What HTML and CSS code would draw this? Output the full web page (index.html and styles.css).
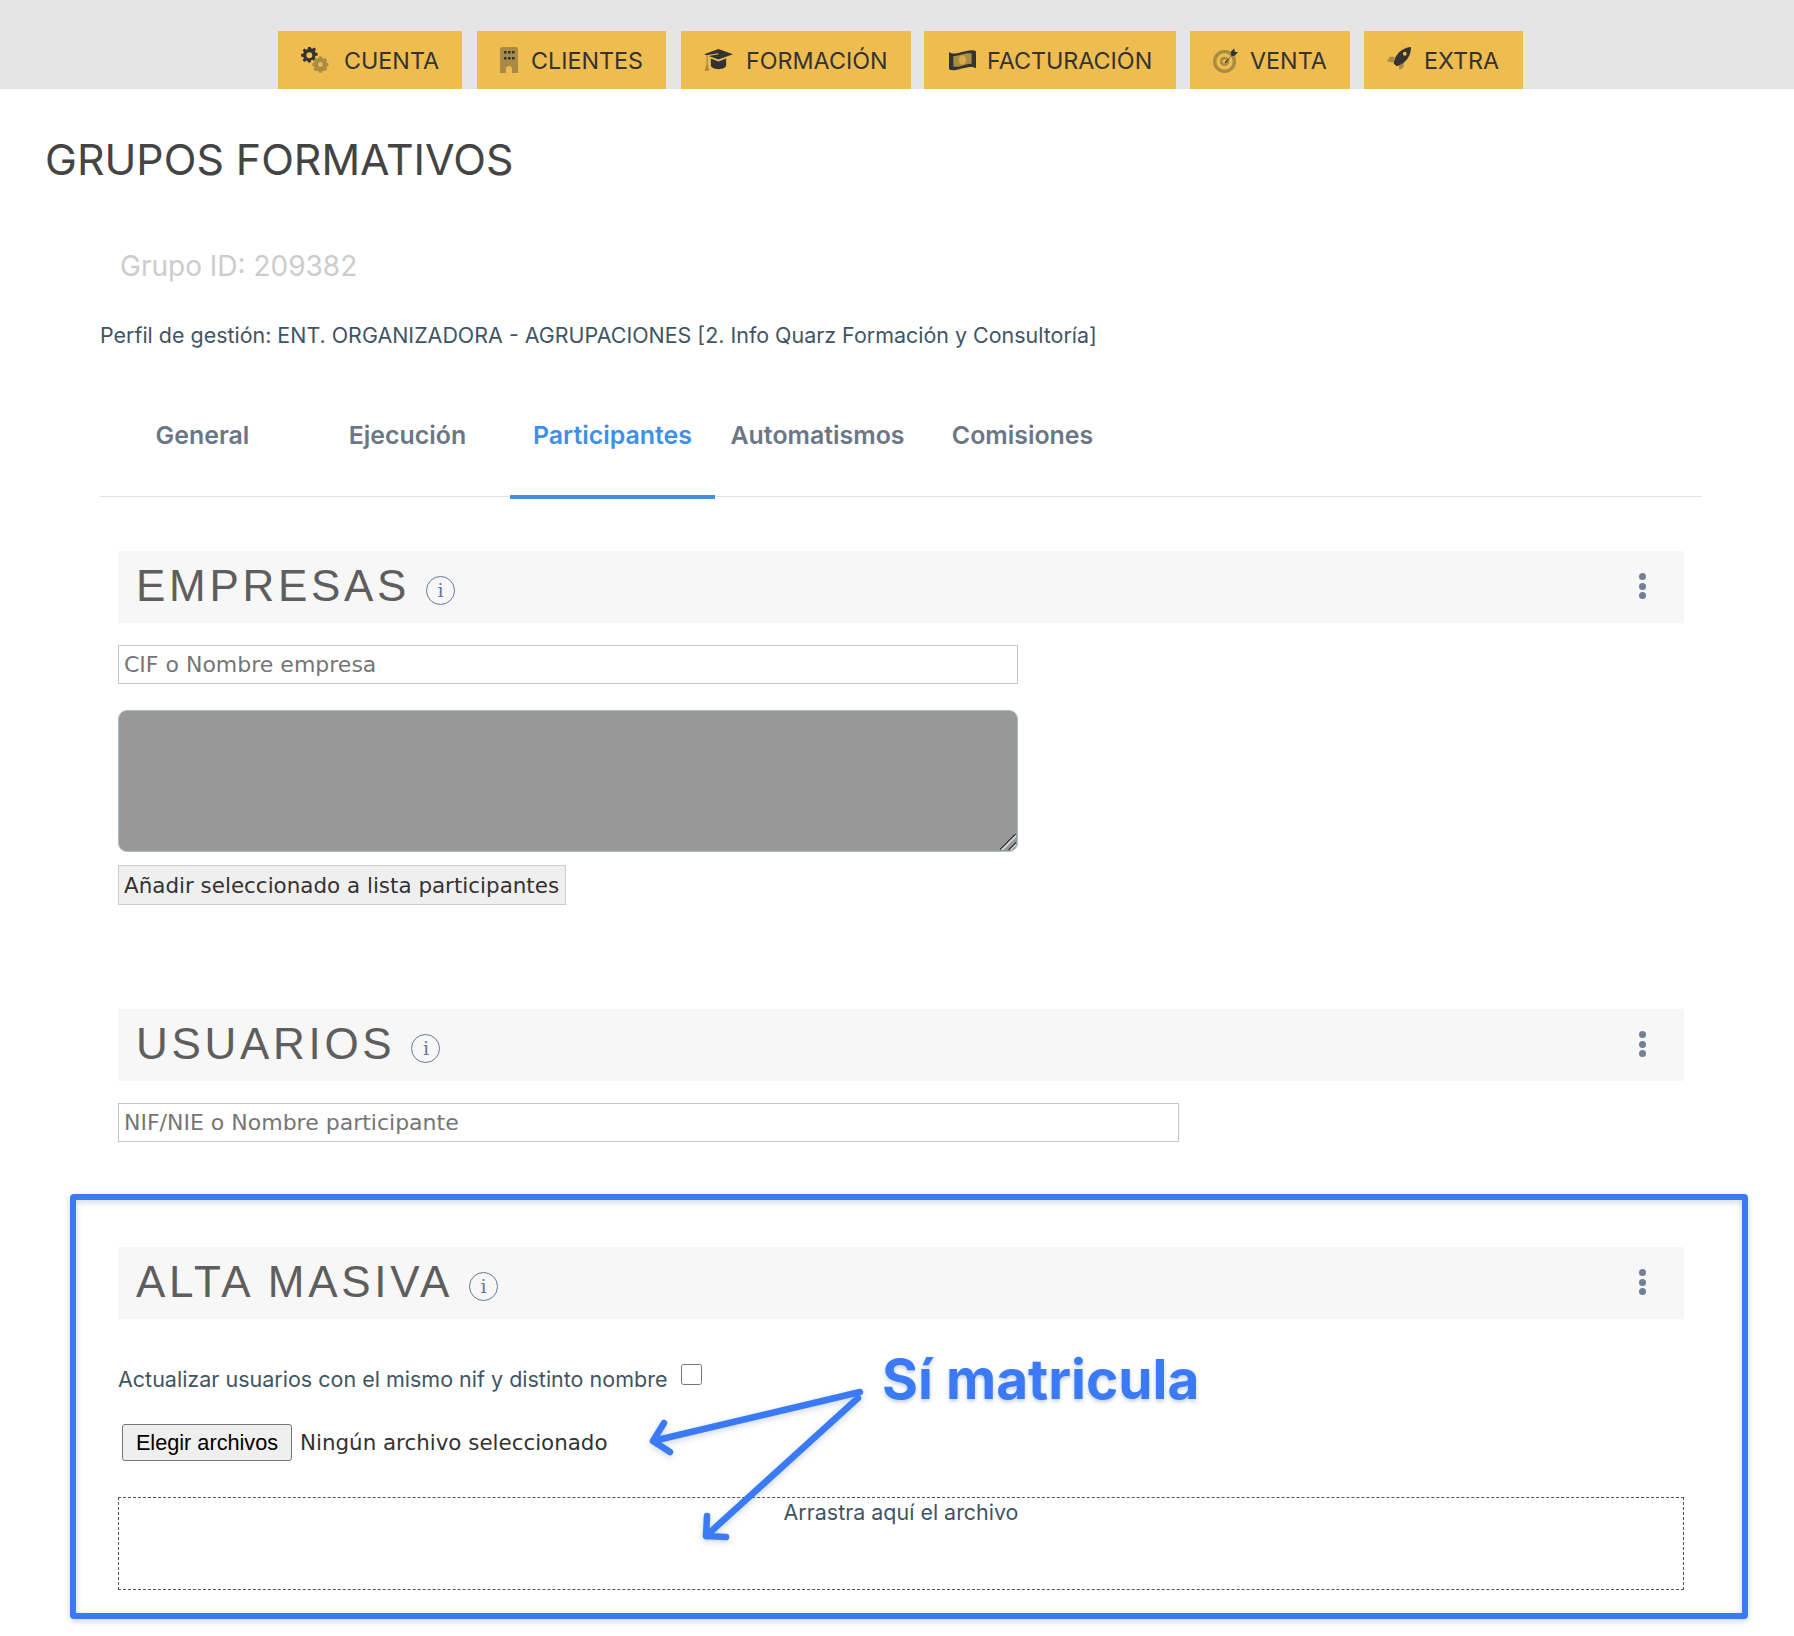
FILE: index.html
```html
<!DOCTYPE html>
<html lang="es">
<head>
<meta charset="utf-8">
<title>Grupos formativos</title>
<link rel="stylesheet" href="styles.css">
</head>
<body>
<nav class="topnav">
  <a class="navbtn nb1"><svg class="ic ic-gears" viewBox="0 0 30 26"><path class="d" fill-rule="evenodd" d="M9.500 0h3l.5 2.600 1.600.7 2.200-1.500 2.100 2.100-1.500 2.200.7 1.600 2.600.5v3l-2.600.5-.7 1.600 1.500 2.200-2.100 2.100-2.200-1.500-1.600.7-.5 2.600h-3L9 17.900l-1.600-.7-2.200 1.500-2.100-2.100 1.500-2.200-.7-1.600-2.600-.5v-3l2.600-.5.7-1.600L3.100 5l2.100-2.100 2.200 1.500L9 3.700zM11 7.300a3.500 3.500 0 1 0 0 7 3.500 3.500 0 0 0 0-7z" transform="translate(-1 -1) scale(.85)"/><path class="l" fill-rule="evenodd" d="M20 10h3.500l.6 2 1.700.8 1.900-1 2.400 2.500-1 1.800.7 1.700 2 .6v3.500l-2 .6-.7 1.700 1 1.800-2.400 2.500-1.900-1-1.700.8-.6 2H20l-.6-2-1.700-.8-1.900 1-2.400-2.500 1-1.800-.7-1.700-2-.6v-3.500l2-.6.7-1.700-1-1.800 2.400-2.500 1.900 1 1.700-.8zM21.750 17a2.900 2.900 0 1 0 0 5.800 2.900 2.900 0 0 0 0-5.800z" transform="translate(2 1.500) scale(.8)"/></svg><span>CUENTA</span></a>
  <a class="navbtn nb2"><svg class="ic ic-building" viewBox="0 0 18 26"><path class="l" d="M2 0h14a2 2 0 0 1 2 2v24h-6v-4a3 3 0 0 0-6 0v4H0V2a2 2 0 0 1 2-2z"/><path class="d" d="M4 4h2.500v2.500H4zM8 4h2.500v2.500H8zM12 4h2.500v2.500H12zM4 10h2.500v2.500H4zM8 10h2.500v2.500H8zM12 10h2.500v2.500H12z"/></svg><span>CLIENTES</span></a>
  <a class="navbtn nb3"><svg class="ic ic-cap" viewBox="0 0 30 24"><path class="d" d="M15 0 30 5.500 15 11 4.800 7.300 15 5.600 14.700 4.500 2.500 6.500 0 5.500z"/><path class="d" d="M7 10l8 3 8-3v7c0 2.500-3.500 4-8 4s-8-1.500-8-4z"/><path class="l" d="M2.500 6.800h1.300v9l1.700 7h-5l1.900-7z"/></svg><span>FORMACIÓN</span></a>
  <a class="navbtn nb4"><svg class="ic ic-bill" viewBox="0 0 28 22"><path class="d" d="M0 3c2 1 4 1.500 7 1.300C12 3.800 17 1.500 22 1c2.500-.2 4.500.2 6 1v17.500c-2 -1-4-1.500-7-1.300-5 .5-10 2.800-15 3.300-2.500.2-4.500-.2-6-1z"/><path class="l" d="M4.500 7c5 0 9-2 13-2.700 2-.3 4-.3 6 0V15c-5 0-9 2-13 2.700-2 .3-4 .3-6 0z"/><ellipse class="y" cx="14" cy="11" rx="3.800" ry="4.800"/></svg><span>FACTURACIÓN</span></a>
  <a class="navbtn nb5"><svg class="ic ic-target" viewBox="0 0 26 26"><path class="l" fill-rule="evenodd" d="M12 2a12 12 0 1 1 0 24 12 12 0 0 1 0-24zm0 3.500a8.500 8.500 0 1 0 0 17 8.500 8.500 0 0 0 0-17zm0 3.500a5 5 0 1 1 0 10 5 5 0 0 1 0-10zm0 3a2 2 0 1 0 0 4 2 2 0 0 0 0-4z"/><path class="d" d="M12 15 19 8l-.5-4 3.500-3.500.7 3.300 3.300.7L22.500 8 18.800 8.500 13 16z"/></svg><span>VENTA</span></a>
  <a class="navbtn nb6"><svg class="ic ic-rocket" viewBox="0 0 26 28"><path class="l" d="M8 10H3l-3 5 7 1zM12 18l1 6 4-3 1-6z"/><path class="d" d="M7 17C8 8 15 1 25 0c0 10-6 17-15 20z"/><circle class="y" cx="18.500" cy="7" r="2"/></svg><span>EXTRA</span></a>
</nav>

<main class="page">
  <h1 class="page-title">GRUPOS FORMATIVOS</h1>
  <p class="group-id">Grupo ID: 209382</p>
  <p class="profile">Perfil de gestión: ENT. ORGANIZADORA - AGRUPACIONES [2. Info Quarz Formación y Consultoría]</p>

  <div class="tabs">
    <a class="tab">General</a>
    <a class="tab">Ejecución</a>
    <a class="tab active">Participantes</a>
    <a class="tab">Automatismos</a>
    <a class="tab">Comisiones</a>
  </div>

  <section class="sections">
    <header class="sec-head first">
      <h2>EMPRESAS</h2><span class="info">i</span>
      <span class="dots"><i></i><i></i><i></i></span>
    </header>
    <input class="field w-short" type="text" placeholder="CIF o Nombre empresa">
    <div class="listbox"><span class="grip"></span></div>
    <button class="add-btn" type="button">Añadir seleccionado a lista participantes</button>

    <header class="sec-head users">
      <h2>USUARIOS</h2><span class="info">i</span>
      <span class="dots"><i></i><i></i><i></i></span>
    </header>
    <input class="field w-long" type="text" placeholder="NIF/NIE o Nombre participante">

    <header class="sec-head bulk">
      <h2>ALTA MASIVA</h2><span class="info">i</span>
      <span class="dots"><i></i><i></i><i></i></span>
    </header>
    <label class="check-row">Actualizar usuarios con el mismo nif y distinto nombre<input type="checkbox"></label>
    <div class="file-row">
      <button class="file-btn" type="button">Elegir archivos</button>
      <span class="file-name">Ningún archivo seleccionado</span>
    </div>
    <div class="dropzone">Arrastra aquí el archivo</div>
  </section>
</main>

<svg class="annot" viewBox="0 0 1794 1636" aria-hidden="true">
  <rect class="frame" x="73" y="1197" width="1672" height="419" rx="1"/>
  <path class="arrow" d="M860 1392 653 1441M664 1423 653 1441 670 1452"/>
  <path class="arrow" d="M858 1398 706 1536M707 1516 706 1536 726 1537"/>
</svg>
<div class="callout">Sí matricula</div>
</body>
</html>
```
FILE: styles.css
```css
* { box-sizing: border-box; }
html, body { margin: 0; padding: 0; }
body {
  position: relative;
  height: 1636px;
  background: #fff;
  font-family: Inter, "Liberation Sans", sans-serif;
  color: #3f5563;
  overflow: hidden;
}

/* top nav */
.topnav {
  display: flex;
  height: 89px;
  padding: 31px 0 0 278px;
  gap: 14px;
  background: #e5e5e5;
}
.navbtn {
  display: flex;
  align-items: center;
  height: 58px;
  padding: 2px 0 0 23px;
  background: #eebc4f;
  color: #333;
  font-size: 23.300px;
  line-height: 1;
  white-space: nowrap;
}
.nb1 { width: 184px; }
.nb2 { width: 189px; margin-left: 1px; }
.nb3 { width: 230px; margin-left: 1px; }
.nb4 { width: 252px; margin-left: -1px; }
.nb5 { width: 160px; }
.nb6 { width: 159px; }
.ic { display: block; flex: none; margin: -2px 13px 0 0; }
.ic .d { fill: #333; }
.ic .l { fill: #a98b43; }
.ic .y { fill: #d8aa49; }
.ic-gears { width: 30px; height: 26px; }
.ic-building { width: 18px; height: 26px; }
.ic-cap { width: 29px; height: 23px; }
.ic-bill { width: 27px; height: 22px; margin-left: 2px; margin-right: 11px; }
.ic-target { width: 25px; height: 25px; margin-right: 12px; }
.ic-rocket { width: 25px; height: 27px; margin-right: 12px; }
.ic-rocket .y { fill: #eebc4f; }

/* page head */
.page { padding: 0; }
.page-title {
  margin: 46px 0 0 45px;
  font-size: 42.800px;
  line-height: 50px;
  font-weight: 400;
  color: #444;
}
.group-id {
  margin: 65px 0 0 120px;
  font-size: 28px;
  line-height: 32px;
  color: #ccc;
}
.profile {
  margin: 40px 0 0 100px;
  font-size: 21.450px;
  line-height: 26px;
  color: #3f5563;
}

/* tabs */
.tabs {
  display: flex;
  width: 1602px;
  height: 87px;
  margin: 62px 0 0 100px;
  border-bottom: 1px solid #e2e2e2;
}
.tab {
  width: 205px;
  height: 89px;
  margin-bottom: -3px;
  text-align: center;
  font-size: 24.900px;
  font-weight: 600;
  line-height: 50px;
  color: #6b7686;
  white-space: nowrap;
}
.tab.active {
  color: #3f8fe6;
  border-bottom: 4px solid #3f8fe6;
}

/* sections */
.sections { display: block; margin: 0 110px 0 118px; }
.sec-head {
  display: flex;
  align-items: center;
  height: 72px;
  padding-left: 18px;
  background: #f7f7f7;
}
.sec-head h2 {
  margin: -2px 0 0;
  font-family: "Liberation Sans", Arial, sans-serif;
  font-size: 44px;
  font-weight: 400;
  line-height: 70px;
  letter-spacing: 3.700px;
  color: #5e5e5e;
}
.sec-head.first { margin-top: 54px; }
.sec-head.users { margin-top: 104px; }
.sec-head.bulk { margin-top: 105px; }
.info {
  display: flex;
  align-items: center;
  justify-content: center;
  width: 29px;
  height: 29px;
  margin: 7px 0 0 16px;
  border: 1.500px solid #64789a;
  border-radius: 50%;
  font-family: "DejaVu Serif", serif;
  font-size: 19px;
  line-height: 1;
  color: #64789a;
}
.dots {
  display: flex;
  flex-direction: column;
  gap: 2.500px;
  margin: -2px 38px 0 auto;
}
.dots i {
  display: block;
  width: 7px;
  height: 7px;
  border-radius: 50%;
  background: #718096;
}
.field {
  display: block;
  height: 39px;
  margin-top: 22px;
  padding: 0 5px;
  border: 1px solid #c4c4c4;
  background: #fff;
  font-family: "DejaVu Sans", sans-serif;
  font-size: 22px;
  color: #757575;
  outline: none;
}
.field::placeholder { color: #757575; opacity: 1; }
.w-short { width: 900px; }
.w-long { width: 1061px; }
.listbox {
  position: relative;
  width: 900px;
  height: 142px;
  margin-top: 26px;
  background: #989898;
  border: 1px solid #a6c0c8;
  border-radius: 9px;
}
.grip {
  position: absolute;
  right: 1px;
  bottom: 1px;
  width: 16px;
  height: 16px;
  background: linear-gradient(135deg, transparent 45%, #444 45%, #444 52%, #ccc 52%, #ccc 60%, transparent 60%, transparent 72%, #444 72%, #444 79%, #ccc 79%, #ccc 86%, transparent 86%);
}
.add-btn {
  display: block;
  width: 448px;
  height: 40px;
  margin-top: 13px;
  padding: 0 5px;
  border: 1px solid #ccc;
  background: #efefef;
  font-family: "DejaVu Sans", sans-serif;
  font-size: 21.450px;
  color: #333;
  text-align: left;
  white-space: nowrap;
}
.check-row {
  display: flex;
  align-items: flex-start;
  height: 34px;
  margin-top: 43px;
  font-size: 21.500px;
  line-height: 35px;
  color: #3f5563;
  white-space: nowrap;
}
.check-row input {
  width: 21px;
  height: 21px;
  margin: 2px 0 0 14px;
}
.file-row {
  display: flex;
  align-items: center;
  height: 37px;
  margin-top: 28px;
  padding-left: 4px;
}
.file-btn {
  width: 170px;
  height: 37px;
  padding: 0;
  border: 1px solid #767676;
  border-radius: 3px;
  background: #efefef;
  font-family: "Liberation Sans", Arial, sans-serif;
  font-size: 21.700px;
  color: #000;
}
.file-name {
  margin-left: 8px;
  font-family: "DejaVu Sans", sans-serif;
  font-size: 21.400px;
  color: #333;
  white-space: nowrap;
}
.dropzone {
  height: 93px;
  margin-top: 36px;
  padding-top: 1px;
  border: 1px dashed #555;
  text-align: center;
  font-size: 21.450px;
  line-height: 26px;
  color: #3f5563;
}

/* annotation overlay */
.annot {
  position: absolute;
  left: 0;
  top: 0;
  width: 1794px;
  height: 1636px;
  pointer-events: none;
  filter: drop-shadow(0 2px 3px rgba(40, 80, 160, .25));
}
.frame { fill: none; stroke: #3a7af5; stroke-width: 6px; }
.arrow {
  fill: none;
  stroke: #3a7af5;
  stroke-width: 6.500px;
  stroke-linecap: round;
  stroke-linejoin: round;
}
.callout {
  position: absolute;
  left: 882px;
  top: 1347px;
  font-size: 55px;
  font-weight: 700;
  line-height: 64px;
  color: #3a7af5;
  text-shadow: 0 2px 4px rgba(40, 80, 160, .3);
  white-space: nowrap;
}
```
